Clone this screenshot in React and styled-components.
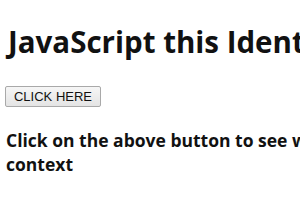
import React from "react";
import styled, { createGlobalStyle } from "styled-components";

const Global = createGlobalStyle`
  html, body { margin: 0; padding: 0; background: #fff; overflow: hidden; }
  body { width: 300px; height: 210px; }
`;

const Page = styled.div`
  width: 545px;
  padding: 0 8px;
  font-family: "Open Sans", "Noto Sans", sans-serif;
  color: #111;
`;

const Title = styled.h1`
  margin: 0;
  padding-top: 24px;
  font-size: 29.5px;
  font-weight: 700;
  line-height: 36px;
  white-space: nowrap;
  letter-spacing: 0;
`;

const Button = styled.button`
  display: block;
  margin: 26px 0 0 -3px;
  height: 21px;
  width: 96px;
  padding: 0;
  font-family: "Liberation Sans", Arial, sans-serif;
  font-size: 13px;
  color: #111;
  background: linear-gradient(#f6f6f6, #e4e4e4);
  border: 1px solid #a9a9a9;
  border-radius: 2px;
`;

const Info = styled.p`
  margin: 21px 0 0 -2px;
  font-size: 17.5px;
  font-weight: 700;
  line-height: 24px;
  letter-spacing: 0;
`;

export default function App() {
  return (
    <>
      <Global />
      <Page>
        <Title>JavaScript this Identifier</Title>
        <Button>CLICK HERE</Button>
        <Info>Click on the above button to see what this refers to in this context</Info>
      </Page>
    </>
  );
}
